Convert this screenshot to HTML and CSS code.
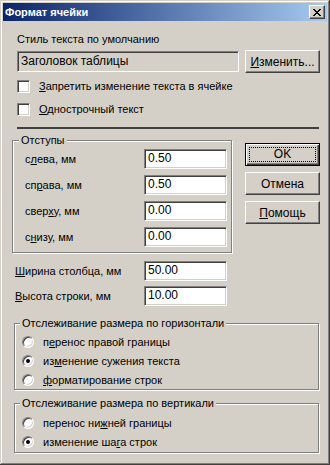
FILE: index.html
```html
<!DOCTYPE html>
<html lang="ru">
<head>
    <meta charset="UTF-8">
    <meta name="viewport" content="width=device-width, initial-scale=1.0">
    <title>Формат ячейки</title>
    <link rel="stylesheet" href="styles.css">
</head>
<body>

<div class="window">
    <div class="titlebar">
        <span class="title">Формат ячейки</span>
        <button class="close" aria-label="Закрыть">
            <svg width="8" height="7" viewBox="0 0 8 7" shape-rendering="crispEdges">
                <path fill="#000" d="M0 0h2v1h-2z M6 0h2v1h-2z M1 1h2v1h-2z M5 1h2v1h-2z M2 2h4v1h-4z M3 3h2v1h-2z M2 4h4v1h-4z M1 5h2v1h-2z M5 5h2v1h-2z M0 6h2v1h-2z M6 6h2v1h-2z"/>
            </svg>
        </button>
    </div>

    <div class="content">
        <div class="caption">Стиль текста по умолчанию</div>
        <div class="style-row">
            <div class="field readonly">Заголовок таблицы</div>
            <button class="btn"><u>И</u>зменить...</button>
        </div>

        <label class="check"><span class="box"></span><span><u>З</u>апретить изменение текста в ячейке</span></label>
        <label class="check second"><span class="box"></span><span><u>О</u>днострочный текст</span></label>

        <div class="separator"></div>

        <div class="middle">
            <div class="group margins">
                <span class="legend">Отступы</span>
                <div class="margin-grid">
                    <span>с<u>л</u>ева, мм</span><div class="field">0.50</div>
                    <span>сп<u>р</u>ава, мм</span><div class="field">0.50</div>
                    <span>свер<u>х</u>у, мм</span><div class="field">0.00</div>
                    <span>с<u>н</u>изу, мм</span><div class="field">0.00</div>
                </div>
            </div>
            <div class="buttons">
                <button class="btn default"><span class="focus">OK</span></button>
                <button class="btn">Отмена</button>
                <button class="btn"><u>П</u>омощь</button>
            </div>
        </div>

        <div class="size-row">
            <span><u>Ш</u>ирина столбца, мм</span><div class="field">50.00</div>
        </div>
        <div class="size-row">
            <span><u>В</u>ысота строки, мм</span><div class="field">10.00</div>
        </div>

        <div class="group wide horiz">
            <span class="legend">Отслеживание размера по горизонтали</span>
            <label class="radio"><span class="dot"></span><span>п<u>е</u>ренос правой границы</span></label>
            <label class="radio"><span class="dot on"></span><span>из<u>м</u>енение сужения текста</span></label>
            <label class="radio"><span class="dot"></span><span><u>ф</u>орматирование строк</span></label>
        </div>

        <div class="group wide vert">
            <span class="legend">Отслеживание размера по вертикали</span>
            <label class="radio"><span class="dot"></span><span>перенос ни<u>ж</u>ней границы</span></label>
            <label class="radio"><span class="dot on"></span><span>изменение ша<u>г</u>а строк</span></label>
        </div>
    </div>
</div>

</body>
</html>
```

FILE: styles.css
```css
body {
    margin: 0;
    background: #d4d0c8;
    font-family: "Liberation Sans", Arial, sans-serif;
    font-size: 11px;
    color: #000;
}

u {
    text-decoration: underline;
    text-underline-offset: 1px;
}

.window {
    width: 330px;
    height: 465px;
    box-sizing: border-box;
    padding: 3px;
    background: #d4d0c8;
    box-shadow: inset -1px -1px #404040, inset 1px 1px #d4d0c8,
                inset -2px -2px #808080, inset 2px 2px #fff;
}

/* title bar */
.titlebar {
    height: 18px;
    display: flex;
    align-items: center;
    justify-content: space-between;
    padding: 0 2px 0 2px;
    background: linear-gradient(to right, #0a246a, #a6caf0);
}

.title {
    color: #fff;
    font-weight: bold;
    line-height: 13px;
}

.close {
    width: 16px;
    height: 14px;
    padding: 0;
    display: flex;
    align-items: center;
    justify-content: center;
    background: #d4d0c8;
    border: 1px solid;
    border-color: #fff #404040 #404040 #fff;
    box-shadow: inset -1px -1px #808080;
}

.close svg { display: block; }

/* body of dialog */
.content {
    padding: 0 7px 0 9px;
}

.caption {
    margin: 12px 0 0 5px;
    line-height: 13px;
}

.style-row {
    margin: 4px 0 0 5px;
    height: 23px;
    display: flex;
    align-items: center;
    justify-content: space-between;
}

.field {
    box-sizing: border-box;
    height: 20px;
    padding: 0 3px;
    background: #fff;
    line-height: 17px;
    font-size: 12px;
    border: 1px solid;
    border-color: #808080 #fff #fff #808080;
    box-shadow: inset 1px 1px #404040, inset -1px -1px #d4d0c8;
    white-space: nowrap;
}

.field.readonly {
    width: 222px;
    height: 21px;
    line-height: 18px;
    background: #d4d0c8;
}

.btn {
    box-sizing: border-box;
    width: 75px;
    height: 23px;
    padding: 0;
    font: inherit;
    font-size: 12px;
    color: #000;
    background: #d4d0c8;
    border: 1px solid;
    border-color: #fff #404040 #404040 #fff;
    box-shadow: inset -1px -1px #808080, inset 1px 1px #d4d0c8;
}

.btn.default {
    border: 1px solid #000;
    box-shadow: inset 1px 1px #fff, inset -1px -1px #404040, inset -2px -2px #808080;
    padding: 3px;
}

.btn .focus {
    display: block;
    height: 100%;
    box-sizing: border-box;
    border: 1px dotted #000;
    line-height: 13px;
}

/* checkboxes */
.check {
    display: flex;
    align-items: center;
    gap: 9px;
    margin: 7px 0 0 5px;
    height: 13px;
    line-height: 13px;
}

.check.second { margin-top: 10px; }

.check .box {
    box-sizing: border-box;
    width: 13px;
    height: 13px;
    background: #fff;
    border: 1px solid;
    border-color: #808080 #fff #fff #808080;
    box-shadow: inset 1px 1px #404040, inset -1px -1px #d4d0c8;
}

.separator {
    margin: 11px 1px 0 5px;
    height: 2px;
    background: #404040;
}

.middle {
    margin-top: 11px;
    display: flex;
    justify-content: space-between;
}

/* etched group frames */
.group {
    box-sizing: border-box;
    border: 1px solid #808080;
    box-shadow: inset 1px 1px #fff, 1px 1px #fff;
}

.legend {
    display: block;
    width: max-content;
    margin: -7px 0 0 6px;
    padding: 0 2px;
    line-height: 13px;
    background: #d4d0c8;
}

.margins {
    width: 220px;
    height: 113px;
}

.margin-grid {
    margin: 2px 5px 0 12px;
    display: grid;
    grid-template-columns: 119px 83px;
    grid-auto-rows: 20px;
    row-gap: 6px;
    align-items: center;
}

.buttons {
    margin-top: 3px;
    display: flex;
    flex-direction: column;
    gap: 6px;
}

.size-row {
    margin: 8px 0 0 3px;
    display: grid;
    grid-template-columns: 129px 83px;
    height: 20px;
    align-items: center;
}

.size-row + .size-row { margin-top: 5px; }

.group.wide {
    margin-left: 2px;
    width: 305px;
}

.group.wide .legend { margin-left: 5px; }

.horiz {
    margin-top: 17px;
    height: 67px;
}

.vert {
    margin-top: 13px;
    height: 50px;
}

.radio {
    display: flex;
    align-items: center;
    gap: 9px;
    height: 19px;
    padding-left: 7px;
}

.horiz .radio:first-of-type { margin-top: 2px; }
.vert .radio:first-of-type { margin-top: 3px; }

.radio .dot {
    box-sizing: border-box;
    width: 12px;
    height: 12px;
    border-radius: 50%;
    background: #fff;
    border: 1px solid;
    border-color: #808080 #fff #fff #808080;
    box-shadow: inset 1px 1px #404040, inset -1px -1px #d4d0c8;
    display: flex;
    align-items: center;
    justify-content: center;
}

.radio .dot.on::after {
    content: "";
    width: 4px;
    height: 4px;
    border-radius: 50%;
    background: #000;
}
```
